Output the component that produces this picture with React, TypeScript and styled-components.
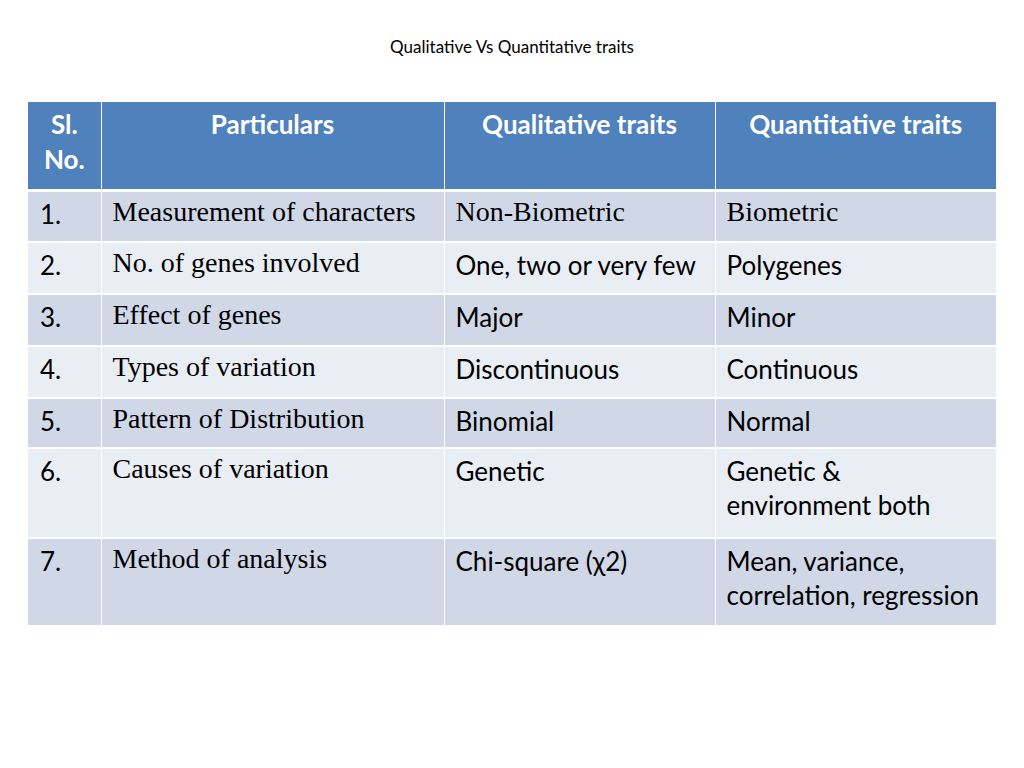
import React from "react";
import styled, { createGlobalStyle } from "styled-components";

const Global = createGlobalStyle`
  html, body { margin: 0; padding: 0; background: #ffffff; }
  body { width: 1024px; height: 768px; overflow: hidden; font-family: Lato, "Open Sans", sans-serif; }
`;

const Slide = styled.div`
  width: 1024px;
  height: 768px;
  display: flex;
  flex-direction: column;
  align-items: center;
  background: #ffffff;
`;

const Title = styled.h1`
  margin: 37px 0 0;
  height: 20px;
  font-family: Lato, "Open Sans", sans-serif;
  font-weight: 400;
  font-size: 17px;
  line-height: 20px;
  color: #000000;
`;

const Table = styled.table`
  margin-top: 45px;
  width: 968px;
  border-collapse: collapse;
  table-layout: fixed;
`;

const Row = styled.tr<{ $h: number; $tone: "head" | "dark" | "light" }>`
  height: ${(p) => p.$h}px;
  background: ${(p) =>
    p.$tone === "head" ? "#4F81BD" : p.$tone === "dark" ? "#D0D8E8" : "#E9EDF4"};
`;

const HeadCell = styled.th`
  padding: 5px 6px 0;
  vertical-align: top;
  text-align: center;
  font-family: Lato, "Open Sans", sans-serif;
  font-weight: 700;
  font-size: 26px;
  line-height: 35px;
  color: #ffffff;
  border-left: 1px solid #ffffff;
  border-bottom: 3px solid #ffffff;
  &:first-child { border-left: none; }
`;

const Cell = styled.td<{ $serif?: boolean }>`
  padding: ${(p) => (p.$serif ? "3px 6px 0 11px" : "5px 6px 0 11px")};
  vertical-align: top;
  font-family: ${(p) =>
    p.$serif ? '"Liberation Serif", "Times New Roman", serif' : 'Lato, "Open Sans", sans-serif'};
  font-size: ${(p) => (p.$serif ? "28px" : "26px")};
  line-height: 34px;
  color: #000000;
  border-left: 1px solid #ffffff;
  border-top: 2px solid #ffffff;
  &:first-child { border-left: none; padding-left: 12px; }
`;

type R = { n: string; p: string; a: string; b: string; serifAll?: boolean; h: number };

const rows: R[] = [
  { n: "1.", p: "Measurement of characters", a: "Non-Biometric", b: "Biometric", serifAll: true, h: 52 },
  { n: "2.", p: "No. of genes involved", a: "One, two or very few", b: "Polygenes", h: 52 },
  { n: "3.", p: "Effect of genes", a: "Major", b: "Minor", h: 52 },
  { n: "4.", p: "Types of variation", a: "Discontinuous", b: "Continuous", h: 52 },
  { n: "5.", p: "Pattern of Distribution", a: "Binomial", b: "Normal", h: 50 },
  { n: "6.", p: "Causes of variation", a: "Genetic", b: "Genetic & environment both", h: 90 },
  { n: "7.", p: "Method of analysis", a: "Chi-square (χ2)", b: "Mean, variance, correlation, regression", h: 87 },
];

export default function App() {
  return (
    <>
      <Global />
      <Slide>
        <Title>Qualitative Vs Quantitative traits</Title>
        <Table>
          <colgroup>
            <col style={{ width: 73 }} />
            <col style={{ width: 343 }} />
            <col style={{ width: 271 }} />
            <col style={{ width: 281 }} />
          </colgroup>
          <thead>
            <Row $h={88} $tone="head">
              <HeadCell>Sl.<br />No.</HeadCell>
              <HeadCell>Particulars</HeadCell>
              <HeadCell>Qualitative traits</HeadCell>
              <HeadCell>Quantitative traits</HeadCell>
            </Row>
          </thead>
          <tbody>
            {rows.map((r, i) => (
              <Row key={r.n} $h={r.h} $tone={i % 2 === 0 ? "dark" : "light"}>
                <Cell>{r.n}</Cell>
                <Cell $serif>{r.p}</Cell>
                <Cell $serif={r.serifAll}>{r.a}</Cell>
                <Cell $serif={r.serifAll}>{r.b}</Cell>
              </Row>
            ))}
          </tbody>
        </Table>
      </Slide>
    </>
  );
}
